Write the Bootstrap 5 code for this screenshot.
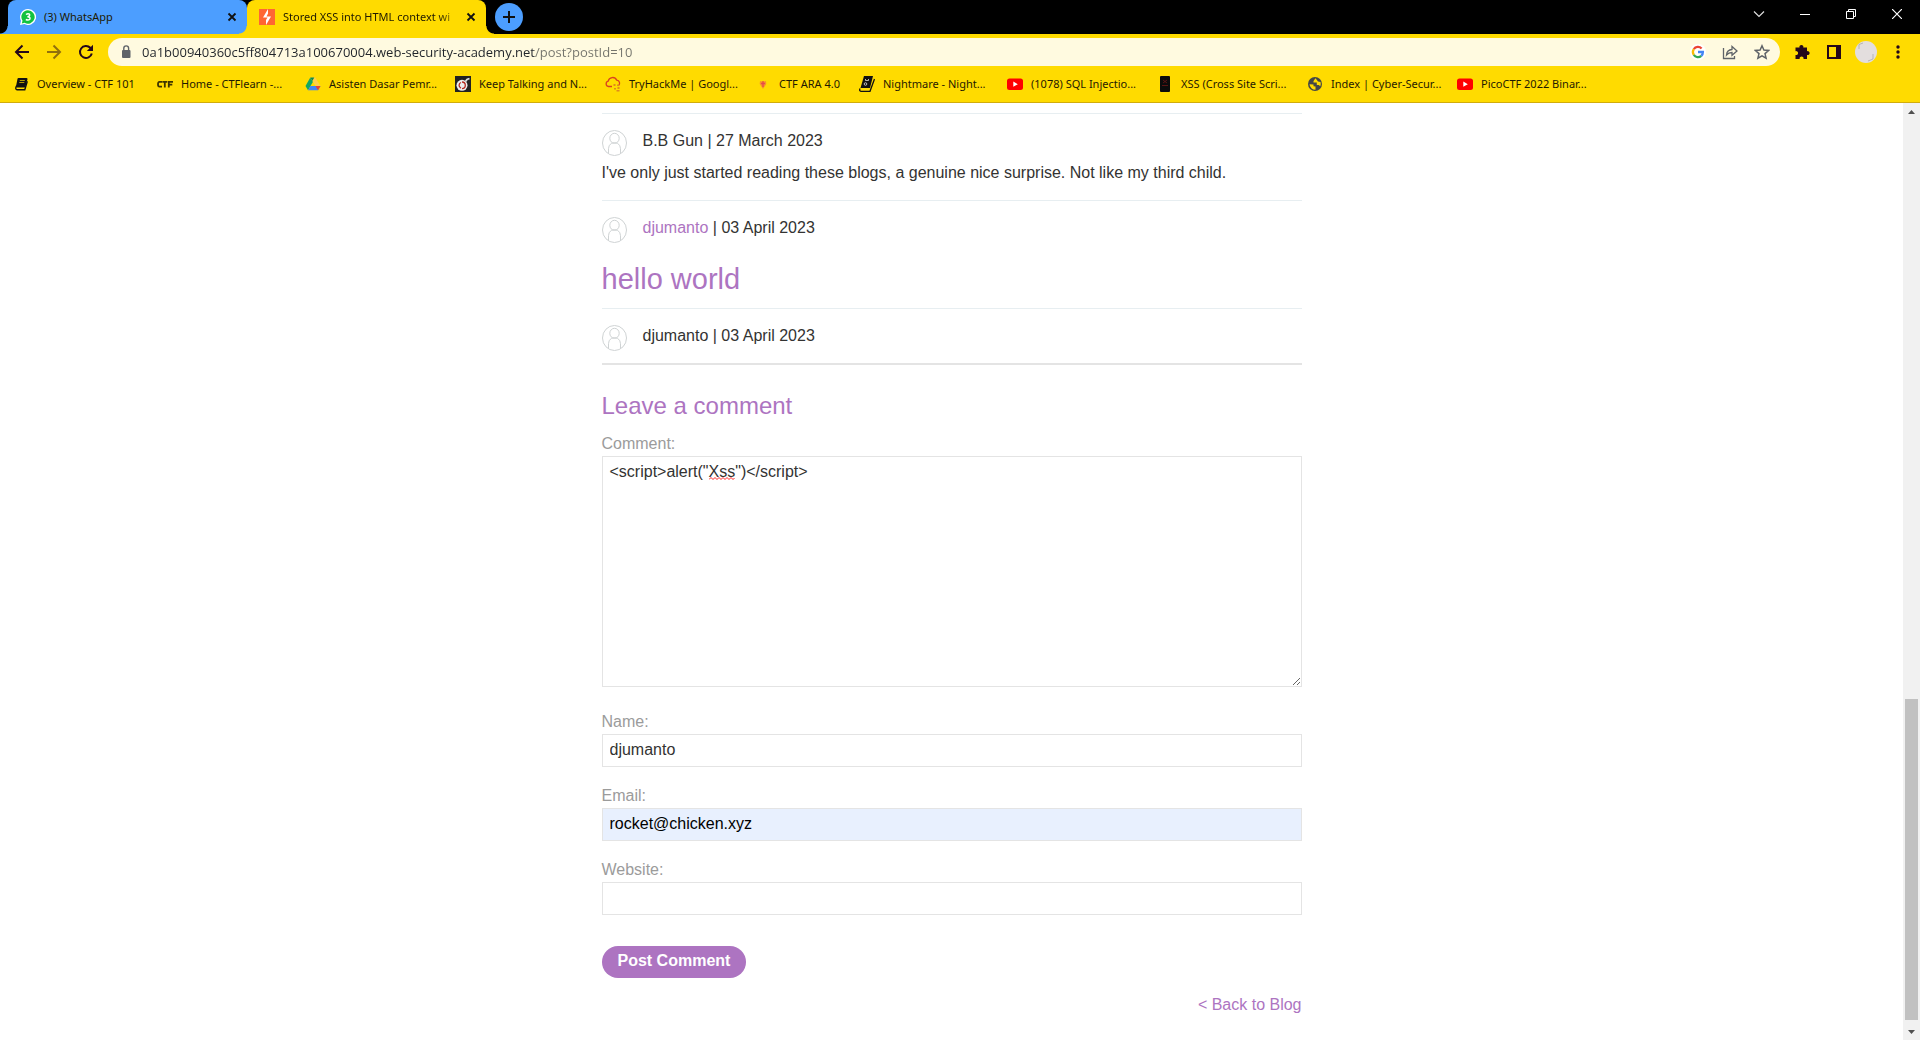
<!DOCTYPE html>
<html lang="en">
<head>
<meta charset="utf-8">
<meta name="viewport" content="width=device-width, initial-scale=1">
<title>Stored XSS into HTML context with nothing encoded</title>
<link href="https://cdn.jsdelivr.net/npm/bootstrap@5.3.0/dist/css/bootstrap.min.css" rel="stylesheet">
<style>
  body { font-family: "Liberation Sans", Arial, sans-serif; font-size: 16px; line-height: 24px; color: #333332; background: #fff; }
  svg { display: block; flex: none; }
  a { color: #ad74c1; text-decoration: none; }
  .chrome-ui { font-family: "Noto Sans", "Segoe UI", sans-serif; font-size: 11px; line-height: 16px; color: #1f1a00; }
  .chrome-ui button { border: 0; background: none; padding: 0; color: inherit; display: flex; align-items: center; justify-content: center; flex: none; }
  .tabstrip { background: #000; height: 34px; padding-left: 8px; }
  .browser-tab { position: relative; width: 239px; height: 34px; padding: 0 7px 0 12px; border-radius: 8px 8px 0 0; gap: 8px; }
  .browser-tab.idle { background: #4c9eff; }
  .browser-tab.current { background: #ffdb00; }
  .browser-tab::before, .browser-tab::after { content: ""; position: absolute; bottom: 0; width: 8px; height: 8px; }
  .browser-tab::before { right: 100%; }
  .browser-tab::after { left: 100%; }
  .idle::before { background: radial-gradient(circle at 0 0, transparent 7px, #4c9eff 8px); }
  .current::before { background: radial-gradient(circle at 0 0, transparent 7px, #ffdb00 8px); }
  .current::after { background: radial-gradient(circle at 100% 0, transparent 7px, #ffdb00 8px); }
  .tab-title { flex: 1 1 0; min-width: 0; white-space: nowrap; }
  .current .tab-title { -webkit-mask-image: linear-gradient(to right, #000 155px, transparent 182px); mask-image: linear-gradient(to right, #000 155px, transparent 182px); }
  .tab-close { width: 16px; height: 16px; }
  .chrome-ui .new-tab { width: 28px; height: 28px; border-radius: 50%; background: #4c9eff; margin-left: 9px; }
  .chrome-ui .win-btn { width: 46px; height: 28px; color: #fff; }
  .toolbar { background: #ffdb00; height: 35px; padding: 0 6px; }
  .chrome-ui .tool-btn { width: 32px; height: 28px; color: #24071a; }
  .omnibox { background: #fffae0; height: 28px; border-radius: 14px; margin: 0 6px; padding-left: 10px; padding-right: 2px; }
  .chrome-ui .omnibox .tool-btn { color: #5f6368; }
  .url-field { border: 0; outline: 0; padding: 0; margin-left: 8px; height: 28px; font-family: "Open Sans", "Segoe UI", sans-serif; font-size: 13px; color: #20242a;
    background: linear-gradient(to right, #20242a 393px, #74746c 393px); -webkit-background-clip: text; background-clip: text; -webkit-text-fill-color: transparent; }
  .bookmarks { background: #ffdb00; height: 34px; border-bottom: 1px solid #d1ac0c; padding: 0 0 4px 13px; overflow: hidden; }
  .bookmark { width: 150px; gap: 8px; flex: none; color: #1f1a00; white-space: nowrap; }
  .bookmark.compact { width: 104px; }
  .bookmark.first { width: 144px; }
  .bookmark.snug { width: 148px; }
  .page-area { padding-top: 10px; }
  .blog-column { max-width: 700px; }
  .entry { border-top: 1px solid #e7eef1; padding: 15px 0; }
  .entry p { margin: 0; }
  .entry p + p { margin-top: 8px; }
  .entry-head { gap: 16px; height: 24px; }
  .entry-head svg { margin-top: 1px; }
  .entry h1 { font-size: 29px; line-height: 36px; font-weight: 400; color: #ad74c1; margin: 21px 0 -4px; }
  .comment-form { border-top: 2px solid #e4e4e4; padding-top: 25px; }
  .comment-form h2 { font-size: 24px; line-height: 32px; font-weight: 400; color: #ad74c1; margin: 0 0 10px; }
  .comment-form label { display: block; color: #9b9b9b; }
  .comment-form .form-control { border: 1px solid #e4e4e4; border-radius: 0; padding: 3px 7px 4px; height: 33px; line-height: 24px; font-size: 16px; color: #333332; margin-bottom: 17px; }
  .comment-form textarea.form-control { height: 231px; margin-bottom: 23px; resize: both; }
  .comment-form .form-control.autofilled { background: #e8f0fe; color: #000; }
  .spell-mark { position: absolute; left: 107px; top: 21px; }
  .btn-post { background: #ad74c1; color: #fff; font-weight: 700; line-height: 24px; padding: 3px 16px 5px; border: 0; border-radius: 16px; margin-top: 14px; }
  .back-link { margin-top: 15px; text-align: right; }
  .scroll-rail { width: 17px; background: #f1f1f1; flex: none; }
  .scroll-rail button { border: 0; padding: 0; background: none; height: 17px; display: flex; align-items: center; justify-content: center; }
  .rail-above { flex: 579 1 0; }
  .rail-thumb { flex: 321 1 0; background: #c1c1c1; margin: 0 2px; }
  .rail-below { flex: 3 1 0; }
</style>
<script src="https://cdn.jsdelivr.net/npm/bootstrap@5.3.0/dist/js/bootstrap.bundle.min.js"></script>
</head>
<body class="d-flex flex-column vh-100 overflow-hidden">

<svg width="0" height="0" class="position-absolute" aria-hidden="true">
  <symbol id="i-close" viewBox="0 0 16 16"><path d="M4.500 4.500l7 7M11.500 4.500l-7 7" stroke="#111" stroke-width="1.800" fill="none"/></symbol>
  <symbol id="i-youtube" viewBox="0 0 16 16"><rect y="2.500" width="16" height="11.500" rx="2.500" fill="#f00"/><path d="M6.300 5.600v5.200l4.500-2.600z" fill="#fff"/></symbol>
  <symbol id="i-avatar" viewBox="0 0 25 26"><g fill="none" stroke="#cfd3d4" stroke-width="1"><ellipse cx="12.500" cy="13" rx="12" ry="12.500"/><ellipse cx="12.500" cy="8.300" rx="4.700" ry="5"/><path d="M6.500 23.500v-4.800a6 6 0 0 1 3.200-5.500M18.500 23.500v-4.800a6 6 0 0 0-3.200-5.500M9.700 13.200q2.800-1 5.600 0"/></g></symbol>
</svg>

<header class="chrome-ui flex-shrink-0">
  <div class="tabstrip d-flex align-items-center">
    <div class="browser-tab idle d-flex align-items-center">
      <svg width="16" height="16" viewBox="0 0 16 16"><path d="M8 0a8 8 0 1 1-3.600 15.100L0 16l1-4.200A8 8 0 0 1 8 0z" fill="#fff"/><path d="M8 1.300a6.700 6.700 0 1 1-3.400 12.500l-2.800.6.700-2.700A6.700 6.700 0 0 1 8 1.300z" fill="#12c23f"/><path d="M6 5.500q2-1.400 3.400-.3 1 1.700-1.900 2.500 3.300.4 2.300 2.500-1.500 1.500-4 .3" fill="none" stroke="#fff" stroke-width="1.500"/></svg>
      <span class="tab-title">(3) WhatsApp</span>
      <button class="tab-close" aria-label="Close tab"><svg width="16" height="16"><use href="#i-close"/></svg></button>
    </div>
    <div class="browser-tab current d-flex align-items-center">
      <svg width="16" height="16" viewBox="0 0 16 16"><path d="M0 0h16v16H0z" fill="#ff6633"/><path d="M9 0v4.500L7.500 7.500H12L7 16v-5l1.500-2.500H4z" fill="#fff"/></svg>
      <span class="tab-title">Stored XSS into HTML context wi</span>
      <button class="tab-close" aria-label="Close tab"><svg width="16" height="16"><use href="#i-close"/></svg></button>
    </div>
    <button class="new-tab" aria-label="New tab"><svg width="14" height="14" viewBox="0 0 14 14"><path d="M7 1v12M1 7h12" stroke="#111" stroke-width="2"/></svg></button>
    <div class="d-flex ms-auto align-self-start">
      <button class="win-btn" aria-label="Search tabs"><svg width="12" height="12" viewBox="0 0 12 12"><path d="M1 3.500l5 5 5-5" fill="none" stroke="#ddd" stroke-width="1.200"/></svg></button>
      <button class="win-btn" aria-label="Minimize"><svg width="10" height="10" viewBox="0 0 10 10"><path d="M0 5.500h10" stroke="#fff"/></svg></button>
      <button class="win-btn" aria-label="Restore"><svg width="10" height="10" viewBox="0 0 10 10"><path d="M.5 2.500h7v7h-7zM2.500 2.500v-2h7v7h-2" fill="none" stroke="#fff"/></svg></button>
      <button class="win-btn" aria-label="Close"><svg width="10" height="10" viewBox="0 0 10 10"><path d="M0 0l10 10M10 0L0 10" stroke="#fff" stroke-width="1.200"/></svg></button>
    </div>
  </div>

  <div class="toolbar d-flex align-items-center">
    <button class="tool-btn" aria-label="Back"><svg width="16" height="16" viewBox="0 0 16 16"><path d="M15 8H2.500M8.500 1.500L2 8l6.500 6.500" fill="none" stroke="currentColor" stroke-width="2"/></svg></button>
    <button class="tool-btn opacity-50" aria-label="Forward"><svg width="16" height="16" viewBox="0 0 16 16"><path d="M1 8h12.500M7.500 1.500L14 8l-6.500 6.500" fill="none" stroke="currentColor" stroke-width="2"/></svg></button>
    <button class="tool-btn" aria-label="Reload"><svg width="16" height="16" viewBox="0 0 16 16"><path d="M13.800 9.500A6 6 0 1 1 12.300 3.800L13.500 5" fill="none" stroke="currentColor" stroke-width="2"/><path d="M15 .8v6.200H8.800z" fill="currentColor"/></svg></button>
    <div class="omnibox d-flex align-items-center flex-grow-1">
      <svg width="16" height="16" viewBox="0 0 16 16"><rect x="4" y="6" width="8.500" height="8" rx="1" fill="#5f6368"/><path d="M5.800 6.500V4.300a2.400 2.400 0 0 1 4.800 0v2.200" fill="none" stroke="#5f6368" stroke-width="1.400"/></svg>
      <input class="url-field flex-grow-1" type="text" aria-label="Address" value="0a1b00940360c5ff804713a100670004.web-security-academy.net/post?postId=10">
      <button class="tool-btn" aria-label="Google"><svg width="16" height="16" viewBox="0 0 16 16"><circle cx="8" cy="8" r="8" fill="#fff"/><g fill="none" stroke-width="2.300"><path d="M3.800 5.200A5 5 0 0 1 11.600 4.500" stroke="#ea4335"/><path d="M3.800 10.800a5 5 0 0 1 0-5.600" stroke="#fbbc05"/><path d="M11.300 11.800a5 5 0 0 1-7.500-1" stroke="#34a853"/><path d="M8 8h4.900a5 5 0 0 1-1.600 3.800" stroke="#4285f4"/></g></svg></button>
      <button class="tool-btn" aria-label="Share"><svg width="16" height="16" viewBox="0 0 16 16"><g fill="none" stroke="currentColor" stroke-width="1.300"><path d="M1.500 4v10.500h11V12"/><path d="M4.500 11c.3-3.500 2.300-5.300 5.500-5.500V2.500l5 4.500-5 4.300V8.500c-2.500 0-4 .7-5.500 2.500z"/></g></svg></button>
      <button class="tool-btn" aria-label="Bookmark this tab"><svg width="16" height="16" viewBox="0 0 16 16"><path d="M8 1.800l1.900 4.300 4.700.4-3.600 3.100 1.100 4.600L8 11.800l-4.100 2.400L5 9.600 1.400 6.500l4.700-.4z" fill="none" stroke="currentColor" stroke-width="1.500"/></svg></button>
    </div>
    <button class="tool-btn" aria-label="Extensions"><svg width="16" height="16" viewBox="0 0 16 16"><path d="M1.500 3.500h4a2 2 0 1 1 3.800 0H13v3.700a2 2 0 1 1 0 3.800v4H9.500a2 2 0 1 0-3.800 0H1.500v-4a2 2 0 1 0 0-3.800z" fill="currentColor"/></svg></button>
    <button class="tool-btn" aria-label="Side panel"><svg width="14" height="14" viewBox="0 0 14 14"><path d="M0 0h14v14H0zM2 2v10h7V2z" fill="currentColor" fill-rule="evenodd"/></svg></button>
    <button class="tool-btn" aria-label="Profile"><svg width="22" height="22" viewBox="0 0 22 22"><circle cx="11" cy="11" r="11" fill="#e3dede"/><path d="M4 8V3.500L8 2M18 13v5l-5 2" fill="none" stroke="#aaa" stroke-width=".8"/></svg></button>
    <button class="tool-btn" aria-label="Menu"><svg width="4" height="14" viewBox="0 0 4 14"><g fill="currentColor"><circle cx="2" cy="2" r="1.700"/><circle cx="2" cy="7" r="1.700"/><circle cx="2" cy="12" r="1.700"/></g></svg></button>
  </div>

  <nav class="bookmarks d-flex align-items-center" aria-label="Bookmarks">
    <a href="#" class="bookmark first d-flex align-items-center"><svg width="16" height="16" viewBox="0 0 16 16"><path d="M5.500 3h8L11.500 10.500H4z" fill="#111" stroke="#111" stroke-width="2" stroke-linejoin="round"/><path d="M3.700 9.500q-2 3.800.3 4.200h7.800l2.500-8.500" fill="none" stroke="#111" stroke-width="1.400"/><path d="M6.800 4.500h5M6.300 6.500h5" stroke="#c9ad00" stroke-width=".9"/></svg>Overview - CTF 101</a>
    <a href="#" class="bookmark snug d-flex align-items-center"><svg width="16" height="16" viewBox="0 0 16 16"><g fill="none" stroke="#3e3500" stroke-width="1.800"><path d="M5 5.900H2.500q-1.500 0-1.500 2.400t1.500 2.400H5M5.300 5.900h5M7.800 5.900v5.700M11.800 11.600V5.900H16M11.800 8.700h3.500"/></g></svg>Home - CTFlearn -...</a>
    <a href="#" class="bookmark d-flex align-items-center"><svg width="16" height="16" viewBox="0 0 16 16"><path d="M5.300 1.500L.5 10l2.500 4.300L8 5.700z" fill="#11a861"/><path d="M5.300 1.500h5L15.500 10h-5z" fill="#ffcf48"/><path d="M5.500 10h10L13 14.300H3z" fill="#4285f4"/><path d="M10.500 10h5L13 14.300z" fill="#ea4335"/><path d="M5.300 1.500h4L7.300 5z" fill="#0d8a4c"/></svg>Asisten Dasar Pemr...</a>
    <a href="#" class="bookmark d-flex align-items-center"><svg width="16" height="16" viewBox="0 0 16 16"><path d="M0 0h16v16H0z" fill="#222"/><circle cx="7" cy="9.300" r="5.500" fill="#eee"/><path d="M7 6a3.300 3.300 0 0 1 0 6.600M6 6.500a3 3 0 0 0 0 5.600" stroke="#b42b20" stroke-width="1.300" fill="none"/><path d="M10.500 5.500l1.500-2 2.500-1" stroke="#ddd" stroke-width="1.800" fill="none"/></svg>Keep Talking and N...</a>
    <a href="#" class="bookmark d-flex align-items-center"><svg width="16" height="16" viewBox="0 0 16 16"><path d="M7 10.500H3.500a2.700 2.700 0 0 1-.3-5.300 4.500 4.500 0 0 1 8.500-1.100 3.200 3.200 0 0 1 1.800 5.600" fill="none" stroke="#d9421f" stroke-width="1.300"/><path d="M8.500 8h2v2h-2zM12 8.500h2v1.500h-2zM9 12h2v1.500H9zM12.500 11h2v2h-2zM11.500 14h3v1.500h-3z" fill="#e08a1c"/></svg>TryHackMe | Googl...</a>
    <a href="#" class="bookmark compact d-flex align-items-center"><svg width="16" height="16" viewBox="0 0 16 16"><path d="M5 5l3 .8 3-.8.3 3L8 13 4.700 8z" fill="#f7932c"/><path d="M8 5v6M6 7.500h4" stroke="#e64b4b" stroke-width="1.300"/></svg>CTF ARA 4.0</a>
    <a href="#" class="bookmark snug d-flex align-items-center"><svg width="16" height="16" viewBox="0 0 16 16"><path d="M5 0h9l-3 12H1.500z" fill="#111"/><path d="M1 12.500Q0 15 2 15.300h9L15.500 3" fill="none" stroke="#111" stroke-width="1.300"/><circle cx="6.500" cy="8" r="1.300" fill="none" stroke="#ddd" stroke-width=".8"/><path d="M6.500 3v1.500h3V3" fill="none" stroke="#ddd" stroke-width=".8"/></svg>Nightmare - Night...</a>
    <a href="#" class="bookmark d-flex align-items-center"><svg width="16" height="16"><use href="#i-youtube"/></svg>(1078) SQL Injectio...</a>
    <a href="#" class="bookmark d-flex align-items-center"><svg width="16" height="16" viewBox="0 0 16 16"><rect x="3" width="10" height="16" rx="1" fill="#0b0b0b"/><path d="M6 4l4 3M10 4L6 7M5 9.500h6" stroke="#6b1515" stroke-width=".8"/></svg>XSS (Cross Site Scri...</a>
    <a href="#" class="bookmark d-flex align-items-center"><svg width="16" height="16" viewBox="0 0 16 16"><circle cx="8" cy="8" r="7" fill="#454746"/><path d="M2.500 8.300l4 .2v1.800l2 .3v3.200a6 6 0 0 1-6-5.500zM8.500 2.300L6.500 5v1.500h3.300V9h2l1.500 1.300A6 6 0 0 0 13.500 6L11 5.500z" fill="#ffdb00"/></svg>Index | Cyber-Secur...</a>
    <a href="#" class="bookmark d-flex align-items-center"><svg width="16" height="16"><use href="#i-youtube"/></svg>PicoCTF 2022 Binar...</a>
  </nav>
</header>

<div class="d-flex flex-grow-1 overflow-hidden">
  <main class="page-area flex-grow-1">
    <div class="blog-column mx-auto">
      <section class="entry">
        <p class="entry-head d-flex"><svg width="25" height="26"><use href="#i-avatar"/></svg><span>B.B Gun | 27 March 2023</span></p>
        <p>I've only just started reading these blogs, a genuine nice surprise. Not like my third child.</p>
      </section>
      <section class="entry">
        <p class="entry-head d-flex"><svg width="25" height="26"><use href="#i-avatar"/></svg><span><a href="#">djumanto</a> | 03 April 2023</span></p>
        <h1>hello world</h1>
      </section>
      <section class="entry">
        <p class="entry-head d-flex"><svg width="25" height="26"><use href="#i-avatar"/></svg><span>djumanto | 03 April 2023</span></p>
      </section>
      <form class="comment-form">
        <h2>Leave a comment</h2>
        <label for="comment">Comment:</label>
        <div class="position-relative">
          <textarea class="form-control" id="comment" spellcheck="false">&lt;script&gt;alert("Xss")&lt;/script&gt;</textarea>
          <svg class="spell-mark" width="27" height="3" viewBox="0 0 27 3"><path d="M0 2.500l2-2 2 2 2-2 2 2 2-2 2 2 2-2 2 2 2-2 2 2 2-2 2 2 1.500-1.500" fill="none" stroke="#f22" stroke-width="1"/></svg>
        </div>
        <label for="name">Name:</label>
        <input class="form-control" id="name" type="text" value="djumanto">
        <label for="email">Email:</label>
        <input class="form-control autofilled" id="email" type="email" value="rocket@chicken.xyz">
        <label for="website">Website:</label>
        <input class="form-control" id="website" type="text">
        <button class="btn-post" type="button">Post Comment</button>
      </form>
      <div class="back-link"><a href="#">&lt; Back to Blog</a></div>
    </div>
  </main>
  <div class="scroll-rail d-flex flex-column">
    <button aria-label="Scroll up"><svg width="7" height="4" viewBox="0 0 7 4"><path d="M0 4l3.500-4L7 4z" fill="#505050"/></svg></button>
    <div class="rail-above"></div><div class="rail-thumb"></div><div class="rail-below"></div>
    <button aria-label="Scroll down"><svg width="7" height="4" viewBox="0 0 7 4"><path d="M0 0l3.500 4L7 0z" fill="#505050"/></svg></button>
  </div>
</div>
</body>
</html>
